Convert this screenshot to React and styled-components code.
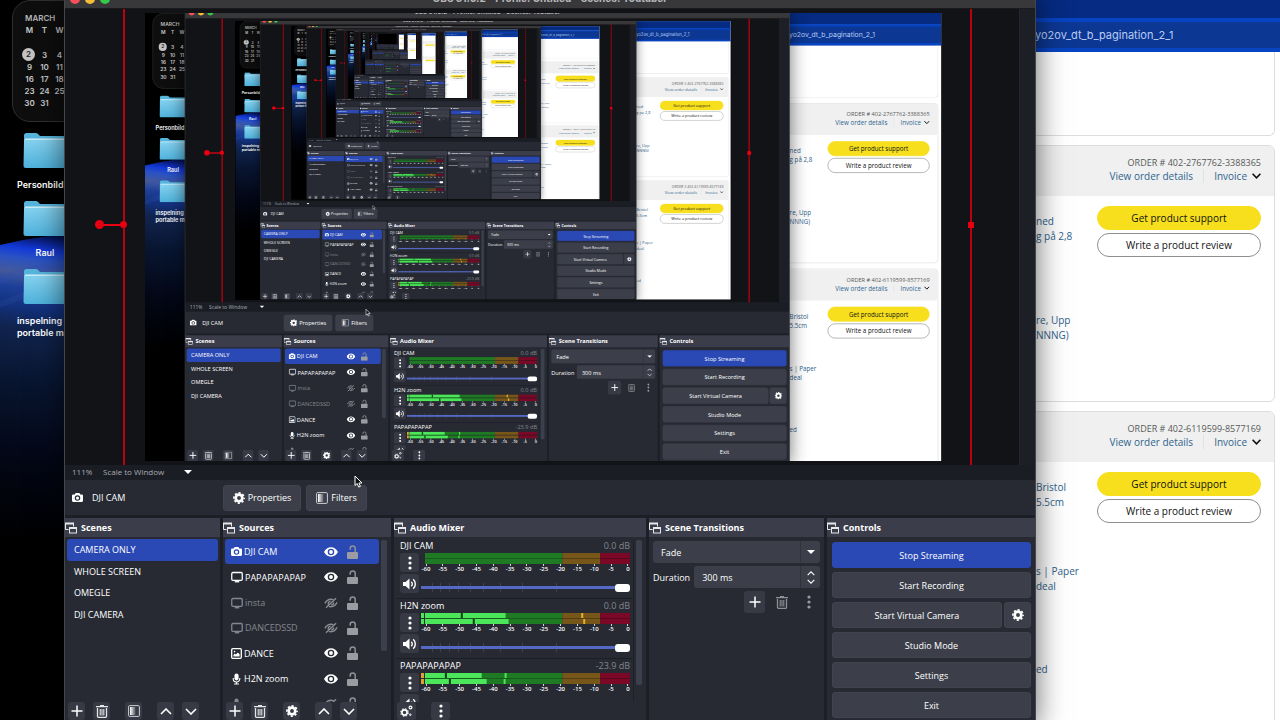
import React, { useId } from 'react';
import styled, { createGlobalStyle } from 'styled-components';

const GlobalStyle = createGlobalStyle`
	* { box-sizing: border-box; }
	body { margin: 0; background: #000; }
	button, input, select { font: inherit; color: inherit; margin: 0; }
	svg { display: block; flex: none; }
`;

/* canvas is rendered at 28/45 of the desktop it captures */
const SCALE_UP = 45 / 28;
const MAX_DEPTH = 8;

/* ---------- icons ---------- */

const GearIcon = ({ size = 12 }) => (
	<svg width={size} height={size} viewBox="0 0 16 16" fill="none" stroke="#fff">
		<circle cx="8" cy="8" r="4.4" strokeWidth="3.6" />
		<circle cx="8" cy="8" r="6.8" strokeWidth="2.2" strokeDasharray="2.9 2.44" strokeDashoffset="1.45" />
	</svg>
);

const CameraIcon = ({ size = 11 }) => (
	<svg width={size} height={size} viewBox="0 0 16 16" fill="#fff">
		<path fillRule="evenodd" d="M5.2 1.5h5.6l1.2 2.2h2.4A1.6 1.6 0 0 1 16 5.3v7.6a1.6 1.6 0 0 1-1.6 1.6H1.6A1.6 1.6 0 0 1 0 12.9V5.3a1.6 1.6 0 0 1 1.6-1.6H4zM8 4.8a4 4 0 1 0 0 8 4 4 0 0 0 0-8z" />
		<circle cx="8" cy="8.8" r="2.3" />
	</svg>
);

const DisplayIcon = () => (
	<svg width="12" height="12" viewBox="0 0 16 16" fill="none" stroke="currentColor">
		<rect x="1" y="2" width="14" height="10.5" rx="1.5" strokeWidth="1.7" />
		<path d="M5 14.3h6" strokeWidth="1.8" />
	</svg>
);

const ImageIcon = () => (
	<svg width="11" height="11" viewBox="0 0 16 16" fill="none" stroke="currentColor">
		<rect x="1" y="1" width="14" height="14" rx="1.5" strokeWidth="1.9" />
		<path d="M3.5 12.5V10l2-2 1.5 1.5L10 6.5l2.5 2.5v3.5z" fill="currentColor" stroke="none" />
		<circle cx="5.2" cy="5.2" r="1.2" fill="currentColor" stroke="none" />
	</svg>
);

const MicIcon = () => (
	<svg width="11" height="12" viewBox="0 0 16 16" fill="none" stroke="currentColor">
		<rect x="5" y="0" width="6" height="10" rx="3" fill="currentColor" stroke="none" />
		<path d="M3.2 6.5v1.2a4.8 4.8 0 0 0 9.6 0V6.5M8 12.5V15M4.5 15.2h7" strokeWidth="1.6" />
	</svg>
);

const EyeIcon = () => (
	<svg width="14" height="12" viewBox="0 0 18 14" fill="#fff">
		<path fillRule="evenodd" d="M0 7C2 3 5.3 1 9 1s7 2 9 6c-2 4-5.3 6-9 6S2 11 0 7zm9-4.2a4.2 4.2 0 1 0 0 8.4 4.2 4.2 0 0 0 0-8.4z" />
		<circle cx="9" cy="7" r="2.5" />
	</svg>
);

const EyeOffIcon = () => (
	<svg width="14" height="12" viewBox="0 0 18 14" fill="none" stroke="#8a8c92" strokeWidth="1.8">
		<path d="M1.2 7.5C3 4 5.7 2.2 9 2.2c1.3 0 2.3.2 3.2.6M16.8 6C15 9.8 12.3 11.8 9 11.8c-1 0-1.9-.1-2.7-.4" />
		<path d="M2.5 13.2L15.5.8M5.5 8.8a3.4 3.4 0 0 1 3-4.2M12.4 6.2A3.4 3.4 0 0 1 9.3 9.6" />
	</svg>
);

const LockIcon = () => (
	<svg width="11" height="14" viewBox="0 0 11 14">
		<path d="M3.2 4.8V3.6a2.5 2.5 0 0 1 5 0V7.5" fill="none" stroke="#8f9197" strokeWidth="1.5" />
		<rect x="0" y="7" width="11" height="7" rx="1" fill="#9b9ca1" />
	</svg>
);

const DockIcon = () => (
	<svg width="12" height="12" viewBox="0 0 12 12" fill="none" stroke="#e8e8ea" strokeWidth="1">
		<path d="M3.5 7.5H.5v-6h8v3" />
		<path d="M0 1.5h9" strokeWidth="2" />
		<rect x="4.5" y="5.5" width="7" height="5.5" />
		<path d="M4 6h8" strokeWidth="2" />
	</svg>
);

const PlusIcon = () => (
	<svg width="12" height="12" viewBox="0 0 12 12" stroke="#fff" strokeWidth="1.5">
		<path d="M6 .5v11M.5 6h11" />
	</svg>
);

const TrashIcon = ({ color = '#e6e6e8' }) => (
	<svg width="12" height="13" viewBox="0 0 12 13" fill="none" stroke={color}>
		<path d="M0 1.7h12M4 .6h4" strokeWidth="1.2" />
		<path d="M1.5 3v8.2a1.2 1.2 0 0 0 1.2 1.2h6.6a1.2 1.2 0 0 0 1.2-1.2V3" strokeWidth="1.3" />
		<path d="M4.2 4v6.5M6 4v6.5M7.8 4v6.5" strokeWidth="1.1" />
	</svg>
);

const FilterIcon = () => {
	const id = useId();
	return (
		<svg width="12" height="12" viewBox="0 0 12 12">
			<defs>
				<linearGradient id={id}>
					<stop offset="0" stopColor="#fff" />
					<stop offset="1" stopColor="#fff" stopOpacity=".15" />
				</linearGradient>
			</defs>
			<rect x=".6" y=".6" width="10.8" height="10.8" rx="1" fill="none" stroke="#cfd0d4" strokeWidth="1" />
			<rect x="2" y="2" width="5.5" height="8" fill={`url(#${id})`} />
		</svg>
	);
};

const Chevron = ({ up, w = 12 }) => (
	<svg width={w} height={w / 2 + 1} viewBox="0 0 12 7" fill="none" stroke="#fff" strokeWidth="1.6">
		<path d={up ? 'M1 6l5-5 5 5' : 'M1 1l5 5 5-5'} />
	</svg>
);

const Caret = () => (
	<svg width="8" height="4" viewBox="0 0 8 4" fill="#fff"><path d="M0 0h8L4 4z" /></svg>
);

const DotsIcon = ({ color = '#fff' }) => (
	<svg width="4" height="14" viewBox="0 0 4 14" fill={color}>
		<circle cx="2" cy="2" r="1.6" />
		<circle cx="2" cy="7" r="1.6" />
		<circle cx="2" cy="12" r="1.6" />
	</svg>
);

const SpeakerIcon = () => (
	<svg width="14" height="12" viewBox="0 0 14 12">
		<path d="M0 4h2.6L6.5.5v11L2.6 8H0z" fill="#fff" />
		<path d="M8.3 3.8a3 3 0 0 1 0 4.4M10.2 1.2a6.5 6.5 0 0 1 0 9.6" fill="none" stroke="#fff" strokeWidth="1.4" />
	</svg>
);

const GearsIcon = () => (
	<svg width="13" height="12" viewBox="0 0 13 12" fill="none" stroke="#fff">
		<circle cx="4.5" cy="7.5" r="2.6" strokeWidth="1.7" />
		<circle cx="4.5" cy="7.5" r="3.9" strokeWidth="1" strokeDasharray="1.53 1.53" />
		<circle cx="10.5" cy="2.5" r="1.4" strokeWidth="1.2" />
		<circle cx="10.3" cy="9.7" r=".8" strokeWidth="1" />
	</svg>
);

const FolderIcon = () => {
	const id = useId();
	return (
		<svg width="44" height="36" viewBox="0 0 44 36">
			<defs>
				<linearGradient id={id} x2="0" y2="1">
					<stop offset="0" stopColor="#86d3f0" />
					<stop offset="1" stopColor="#4fb2dc" />
				</linearGradient>
			</defs>
			<path d="M1 3.5A2.5 2.5 0 0 1 3.5 1h9c1.2 0 2 .4 2.8 1.3L17 4h24a3 3 0 0 1 3 3v8H1z" fill="#57b5dc" />
			<path d="M1 9a2.5 2.5 0 0 1 2.5-2.5H44V33a3 3 0 0 1-3 3H3a2.5 2.5 0 0 1-2.5-2.5z" fill={`url(#${id})`} />
			<path d="M2 7.2h42" stroke="#e9f8ff" strokeWidth="1" />
		</svg>
	);
};

/* ---------- desktop ---------- */

const Screen = styled.div`
	position: relative;
	width: ${p => (p.$root ? '100%' : `${SCALE_UP * 100}%`)};
	height: ${p => (p.$root ? '100vh' : `${SCALE_UP * 100}%`)};
	transform: ${p => (p.$root ? 'none' : `scale(${1 / SCALE_UP})`)};
	transform-origin: 0 0;
	overflow: hidden;
	background: #000;
	font-family: "Open Sans", "Noto Sans", sans-serif;
	font-size: 9px;
	color: #fff;
`;

const Wallpaper = styled.svg`
	position: absolute;
	left: 0;
	bottom: 0;
	width: 240px;
	height: 490px;
`;

const DesktopItems = styled.div`
	width: 120px;
	padding-left: 12px;
	font-family: Inter, "Liberation Sans", sans-serif;
	font-weight: 600;
	position: relative;
`;

const Calendar = styled.section`
	height: 122px;
	padding: 11px 9px 0;
	border: 1px solid #2f2f2f;
	border-radius: 18px;
	background: #0e0e0f;
	color: #c9c9c9;
	font-size: 8px;

	h2 {
		margin: 0 0 0 3px;
		font-size: 8px;
		font-weight: 600;
		line-height: 12px;
		color: #b9b9b9;
	}
	table { border-collapse: collapse; }
	th, td {
		width: 15px;
		height: 12px;
		padding: 0;
		text-align: center;
		font-weight: 600;
		line-height: 12px;
	}
	th { height: 24px; vertical-align: top; }
`;

const Today = styled.span`
	display: block;
	width: 13px;
	height: 13px;
	border-radius: 50%;
	background: #c4c4c4;
	color: #222;
	line-height: 13px;
`;

const Folder = styled.div`
	width: 66px;
	height: 68px;
	padding: 0 5px;
	font-size: 9px;
	line-height: 12px;
	text-align: ${p => (p.$center ? 'center' : 'left')};

	svg { margin: 0 0 11px 6px; }
	span { display: block; white-space: nowrap; }
`;

const Folders = styled.div`
	padding-top: 10px;
`;

/* ---------- browser behind OBS ---------- */

const Browser = styled.main`
	position: absolute;
	top: 0;
	right: 0;
	bottom: 0;
	width: 245px;
	background: #fff;
	overflow: hidden;
	font-size: 10px;
`;

const TabStrip = styled.div`
	height: 18px;
	background: #052b82;
`;

const AddressBar = styled.div`
	height: 34px;
	border: solid #0743c2;
	border-width: 4px 0;
	background: #0c3793;
	color: #b9cdf5;
	font-family: Inter, "Liberation Sans", sans-serif;
	font-size: 11px;
	line-height: 26px;
`;

const OrderCard = styled.article`
	height: ${p => p.$height};
	margin: 0 5px 9px -10px;
	border: 1px solid #dcdddd;
	border-radius: ${p => (p.$cut ? '0 0 6px 6px' : '6px')};
	border-top-width: ${p => (p.$cut ? 0 : '1px')};
	overflow: hidden;
`;

const OrderHead = styled.header`
	display: flex;
	flex-direction: column;
	align-items: flex-end;
	height: 50px;
	padding: 10px 13px 0 0;
	background: #f0f0f0;
	color: #565959;
	font-size: 9px;
	line-height: 13px;
`;

const OrderLinks = styled.nav`
	display: flex;
	align-items: center;
	font-size: 10px;
	line-height: 14px;

	a { color: #2f648f; text-decoration: none; }
	a + a {
		display: flex;
		align-items: center;
		gap: 5px;
		margin-left: 10px;
		padding-left: 10px;
		border-left: 1px solid #e2e2e2;
	}
`;

const OrderBody = styled.div`
	display: flex;
	justify-content: space-between;
	padding: 10px 13px 0 10px;
`;

const Product = styled.a`
	display: block;
	height: ${p => p.$height}px;
	padding-top: 8px;
	color: #2f5f8c;
	line-height: 15px;
	text-decoration: none;
	white-space: pre-line;
`;

const OrderActions = styled.div`
	display: flex;
	flex-direction: column;
	gap: 3px;
	width: 164px;
`;

const PillButton = styled.button`
	height: 24px;
	padding: 0;
	border: 1px solid ${p => (p.$primary ? '#f7df1e' : '#8b8f8f')};
	border-radius: 12px;
	background: ${p => (p.$primary ? '#f7df1e' : '#fff')};
	color: #0f1111;
	font-weight: 500;
`;

/* ---------- OBS window ---------- */

const ObsWindow = styled.section`
	position: absolute;
	top: -12px;
	left: 64px;
	right: 244px;
	bottom: 0;
	display: flex;
	flex-direction: column;
	border: solid #45464c;
	border-width: 0 1px;
	background: #1d1f26;
	box-shadow: 0 8px 28px rgba(0, 0, 0, .6);
`;

const TitleBar = styled.header`
	position: relative;
	display: flex;
	align-items: center;
	justify-content: center;
	flex: none;
	height: 21px;
	background: #38383a;
	border-bottom: 1px solid #1a1a1c;
	color: #b8b8ba;
	font-family: Inter, "Liberation Sans", sans-serif;
	font-size: 10px;
	font-weight: 700;
`;

const Lights = styled.div`
	position: absolute;
	left: 5px;
	top: 6px;
	display: flex;
	gap: 5px;
`;

const Light = styled.span`
	width: 10px;
	height: 10px;
	border-radius: 50%;
	background: ${p => p.$color};
`;

const Preview = styled.div`
	flex: 1;
	min-height: 0;
	display: flex;
	align-items: center;
	justify-content: center;
	padding-left: 3px;
	margin-right: 15px;
	border-right: 1px solid #25262c;
	background: #121317;
	overflow: hidden;
`;

const CanvasWrap = styled.div`
	position: relative;
	flex: none;
	height: calc(100% - 8px);
	aspect-ratio: 16 / 9;
`;

const Canvas = styled.div`
	width: 100%;
	height: 100%;
	overflow: hidden;
	background: #000;
`;

/* selection outline of the camera source, wider than the canvas */
const SourceOutline = styled.div`
	position: absolute;
	top: -40px;
	bottom: -40px;
	left: -22px;
	right: -30px;
	border: solid #bd0010;
	border-width: 0 2px;
`;

const Handle = styled.i`
	position: absolute;
	top: calc(47% - 1px);
	background: #e60012;

	&.rotate { left: -30px; width: 9px; height: 9px; border-radius: 50%; }
	&.stem { left: -24px; width: 24px; height: 2px; margin-top: 4px; }
	&.left { left: -5px; width: 7px; height: 7px; margin-top: 1px; border-radius: 50%; }
	&.right { right: -4px; width: 6px; height: 6px; margin-top: 2px; }
`;

const ZoomBar = styled.div`
	display: flex;
	align-items: center;
	flex: none;
	height: 15px;
	padding: 0 0 2px 7px;
	background: #1b1d24;
	color: #a9abb2;
	font-size: 8px;

	span { width: 81px; }
	span:first-child { width: 31px; }
`;

const ContextBar = styled.div`
	display: flex;
	align-items: center;
	flex: none;
	height: 35px;
	margin-bottom: 3px;
	padding-left: 7px;
	background: #272a33;
`;

const ContextName = styled.div`
	display: flex;
	align-items: center;
	gap: 9px;
	width: 151px;
`;

const Button = styled.button`
	display: flex;
	align-items: center;
	justify-content: center;
	gap: 3px;
	height: 26px;
	padding: 0;
	border: 1px solid ${p => (p.$primary ? '#2a49b5' : '#41444f')};
	border-radius: 3px;
	background: ${p => (p.$primary ? '#2a49b5' : '#3c3f4a')};
	width: ${p => (p.$width ? `${p.$width}px` : 'auto')};
	flex: ${p => (p.$grow ? 1 : 'none')};
	margin-right: ${p => (p.$gapRight ? '5px' : 0)};
`;

const Docks = styled.div`
	display: flex;
	flex: none;
	gap: 3px;
	height: 202px;
`;

const DockBox = styled.section`
	display: flex;
	flex-direction: column;
	flex: ${p => p.$size} 1 0;
	min-width: 0;
	background: #272a33;
`;

const DockTitle = styled.h2`
	display: flex;
	align-items: center;
	gap: 4px;
	flex: none;
	height: 19px;
	margin: 0;
	background: #3b3e4a;
	font-size: 9px;
	font-weight: 700;
`;

const DockBody = styled.div`
	flex: 1;
	min-height: 0;
	overflow: hidden;
	display: flex;
	padding: 2px 2px 0 2px;
`;

const SceneList = styled.ul`
	flex: 1;
	display: grid;
	grid-auto-rows: 1fr;
	height: 86px;
	margin: 0;
	padding: 0;
	list-style: none;
`;

const SceneItem = styled.li`
	display: flex;
	align-items: center;
	padding-left: 7px;
	border-radius: 3px;
	background: ${p => (p.$active ? '#2a49b5' : 'none')};
`;

const SourceList = styled(SceneList)`
	height: 178px;
`;

const SourceItem = styled(SceneItem)`
	padding: 0 21px 0 6px;
	color: ${p => (p.$off ? '#85878e' : '#fff')};
	gap: 2px;

	span { flex: 1; white-space: nowrap; }
	svg:last-child { margin-left: 7px; }
`;

const ScrollThumb = styled.div`
	flex: none;
	width: 6px;
	height: ${p => p.$height}px;
	margin: 1px 2px 0 2px;
	border-radius: 2px;
	background: #3c404d;
`;

const DockToolbar = styled.div`
	display: flex;
	flex: none;
	gap: 8px;
	height: 18px;
	padding-left: 3px;
	overflow: hidden;
`;

const ToolButton = styled.button`
	display: flex;
	align-items: center;
	justify-content: center;
	flex: none;
	width: ${p => p.$width || 17}px;
	height: ${p => p.$height || 18}px;
	padding: 0;
	border: 0;
	border-radius: 3px;
	background: ${p => (p.$flat ? 'none' : '#373a45')};
	margin-left: ${p => (p.$apart ? '7px' : 0)};
`;

/* ---------- mixer ---------- */

const Channels = styled.div`
	flex: 1;
	min-width: 0;
	border-right: 1px solid #1f2129;
`;

const Channel = styled.div`
	height: 60px;
	padding: 0 3px 0 4px;
	border-bottom: 1px solid #1d1f26;
`;

const ChannelHead = styled.div`
	display: flex;
	justify-content: space-between;
	height: 14px;
	line-height: 13px;

	output { color: #84868d; }
`;

const ChannelBody = styled.div`
	display: flex;
	gap: 2px;
`;

const ChannelButtons = styled.div`
	display: flex;
	flex-direction: column;
	gap: 2px;
`;

const Meters = styled.div`
	flex: 1;
	min-width: 0;
`;

const MeterSvg = styled.svg`
	width: 100%;
	height: 11px;
`;

const Scale = styled.div`
	display: flex;
	justify-content: space-between;
	height: 12px;
	margin-right: -3px;
	font-size: 6px;
	font-weight: 600;
	line-height: 9px;

	span {
		width: 10px;
		text-align: center;
		background: linear-gradient(#d0d0d3, #d0d0d3) 50% 0 / 1px 2px no-repeat;
		padding-top: 1px;
	}
`;

const faderTicks = [11, 19, 28, 37, 49, 62, 79, 101, 135];

const Fader = styled.input`
	display: block;
	appearance: none;
	width: 100%;
	height: 15px;
	margin: 4px 0 0;
	background:
		linear-gradient(#5468c4, #5468c4) 0 50% / 100% 3px no-repeat,
		${faderTicks.map(x => `linear-gradient(#3c404d, #3c404d) ${x}px 50% / 1px 9px no-repeat`).join(', ')};

	&::-webkit-slider-thumb {
		appearance: none;
		width: 15px;
		height: 8px;
		border-radius: 3px;
		background: #fff;
	}
`;

/* ---------- transitions ---------- */

const TransitionBody = styled.div`
	display: flex;
	flex-direction: column;
	gap: 3px;
	padding: 4px 4px 0;
`;

const Field = styled.div`
	display: flex;
	align-items: center;
	flex: 1 1 auto;
	min-width: 0;
	height: 22px;
	border-radius: 3px;
	background: #3c3f4a;

	select, input {
		appearance: none;
		flex: 1;
		width: 0;
		height: 100%;
		padding: 0 0 0 8px;
		border: 0;
		background: none;
	}
`;

const FieldArrow = styled.span`
	display: flex;
	flex-direction: column;
	align-items: center;
	justify-content: center;
	gap: 3px;
	flex: none;
	width: 20px;
	height: 100%;
	border-left: 1px solid #30333d;
	pointer-events: none;
`;

const FieldRow = styled.div`
	display: flex;
	align-items: center;
	gap: 4px;
`;

const TransitionTools = styled.div`
	display: flex;
	justify-content: flex-end;
	gap: 6px;
	padding-right: 1px;
`;

const ControlList = styled.div`
	display: flex;
	flex-direction: column;
	gap: 4px;
	padding: 5px 4px 0 5px;
	overflow: hidden;
`;

const ControlRow = styled.div`
	display: flex;
	gap: 2px;
`;

const Cursor = styled.svg`
	position: absolute;
	left: 289px;
	bottom: 232px;
`;

const scenes = ['CAMERA ONLY', 'WHOLE SCREEN', 'OMEGLE', 'DJI CAMERA'];

const sources = [
	{ name: 'DJI CAM', icon: <CameraIcon />, on: true, active: true },
	{ name: 'PAPAPAPAPAP', icon: <DisplayIcon />, on: true },
	{ name: 'insta', icon: <DisplayIcon />, on: false },
	{ name: 'DANCEDSSD', icon: <DisplayIcon />, on: false },
	{ name: 'DANCE', icon: <ImageIcon />, on: true },
	{ name: 'H2N zoom', icon: <MicIcon />, on: true },
	{ name: '', icon: <MicIcon />, on: false },
];

/* bars and marks in meter units, 0 to 210 */
const channels = [
	{ name: 'DJI CAM', db: '0.0 dB', bars: [0, 0], marks: [] },
	{
		name: 'H2N zoom', db: '0.0 dB', clip: '#4ce65a', bars: [85, 88],
		marks: [[0, 40, '#103d18'], [1, 52, '#103d18'], [0, 161, '#e0b030'], [1, 163, '#e0b030']],
	},
	{
		name: 'PAPAPAPAPAP', db: '-23.9 dB', clip: '#e0a030', bars: [61, 66],
		marks: [[0, 24, '#103d18'], [1, 28, '#103d18'], [0, 84, '#4ce65a'], [1, 83, '#4ce65a']],
	},
];

const ticks = [-60, -55, -50, -45, -40, -35, -30, -25, -20, -15, -10, -5, 0];

const Meter = ({ bars, marks, clip }) => (
	<MeterSvg viewBox="0 0 210 11" preserveAspectRatio="none">
		{[0, 1].map(i => (
			<g key={i} transform={`translate(0 ${i * 6})`}>
				<rect x="4" width="138" height="5" fill="#1f7a24" />
				<rect x="142" width="38" height="5" fill="#77561a" />
				<rect x="180" width="30" height="5" fill="#7a0826" />
				{clip && <rect x="0" width="3" height="5" fill={clip} />}
				{bars[i] > 0 && <rect x="4" width={bars[i] - 4} height="5" fill="#4ce65a" />}
				{marks.filter(m => m[0] === i).map(m => (
					<rect key={m[1]} x={m[1]} width="2" height="5" fill={m[2]} />
				))}
			</g>
		))}
		<path d="M4 5.5h138" stroke="#175a1c" />
		<path d="M142 5.5h38" stroke="#553d12" />
		<path d="M180 5.5h30" stroke="#5b061d" />
	</MeterSvg>
);

const Dock = ({ title, size, children }) => (
	<DockBox $size={size}>
		<DockTitle><DockIcon />{title}</DockTitle>
		{children}
	</DockBox>
);

const ListToolbar = ({ middle }) => (
	<DockToolbar>
		<ToolButton aria-label="Add"><PlusIcon /></ToolButton>
		<ToolButton aria-label="Remove"><TrashIcon /></ToolButton>
		<ToolButton aria-label="Options" $apart>{middle}</ToolButton>
		<ToolButton aria-label="Move up" $apart><Chevron up /></ToolButton>
		<ToolButton aria-label="Move down"><Chevron /></ToolButton>
	</DockToolbar>
);

const Order = ({ number, height, products }) => (
	<OrderCard $height={height}>
		<OrderHead>
			<span>ORDER # {number}</span>
			<OrderLinks>
				<a href="#details">View order details</a>
				<a href="#invoice">
					Invoice
					<svg width="9" height="6" viewBox="0 0 9 6" fill="none" stroke="#0f1111" strokeWidth="1.6"><path d="M.6.8l3.9 4 3.9-4" /></svg>
				</a>
			</OrderLinks>
		</OrderHead>
		<OrderBody>
			<div>
				{products.map(p => (
					<Product key={p.text} href="#product" $height={p.height}>{p.text}</Product>
				))}
			</div>
			<OrderActions>
				<PillButton $primary>Get product support</PillButton>
				<PillButton>Write a product review</PillButton>
			</OrderActions>
		</OrderBody>
	</OrderCard>
);

const Desktop = () => {
	const id = useId();
	return (
		<>
			<Wallpaper viewBox="0 0 240 490" preserveAspectRatio="none">
				<defs>
					<linearGradient id={id} x2="-60" y2="490" gradientUnits="userSpaceOnUse">
						<stop offset="0" stopColor="#04104a" />
						<stop offset=".03" stopColor="#1238d8" />
						<stop offset=".05" stopColor="#2a52c4" />
						<stop offset=".08" stopColor="#44599a" />
						<stop offset=".11" stopColor="#1d3f98" />
						<stop offset=".15" stopColor="#12307c" />
						<stop offset=".19" stopColor="#11244e" />
						<stop offset=".3" stopColor="#081530" />
						<stop offset=".45" stopColor="#030716" />
						<stop offset=".62" stopColor="#000" />
					</linearGradient>
				</defs>
				<path d="M0 15Q50 3 110 0H240V490H0z" fill={`url(#${id})`} />
				<path d="M0 46Q30 34 80 28V34Q40 40 0 54z" fill="#2c50b8" opacity=".25" />
				<path d="M0 72Q30 56 80 52V58Q40 62 0 78z" fill="#3355a8" opacity=".2" />
			</Wallpaper>
			<DesktopItems>
				<Calendar>
					<h2>MARCH</h2>
					<table>
						<thead><tr><th>M</th><th>T</th><th>W</th></tr></thead>
						<tbody>
							<tr><td><Today>2</Today></td><td>3</td><td>4</td></tr>
							<tr><td>9</td><td>10</td><td>11</td></tr>
							<tr><td>16</td><td>17</td><td>18</td></tr>
							<tr><td>23</td><td>24</td><td>25</td></tr>
							<tr><td>30</td><td>31</td><td /></tr>
						</tbody>
					</table>
				</Calendar>
				<Folders>
					<Folder><FolderIcon /><span>Personbild</span></Folder>
					<Folder $center><FolderIcon /><span>Raul</span></Folder>
					<Folder><FolderIcon /><span>inspelning</span><span>portable m</span></Folder>
				</Folders>
			</DesktopItems>
		</>
	);
};

const Obs = ({ depth }) => {
	const id = useId();
	return (
		<ObsWindow>
			<TitleBar>
				<Lights>
					<Light $color="#f4515c" />
					<Light $color="#f8bd38" />
					<Light $color="#35c94a" />
				</Lights>
				OBS 31.0.2 - Profile: Untitled - Scenes: Youtuber
			</TitleBar>
			<Preview>
				<CanvasWrap>
					<Canvas inert>
						{depth < MAX_DEPTH && <Workspace depth={depth + 1} />}
					</Canvas>
					<SourceOutline>
						<Handle className="rotate" />
						<Handle className="stem" />
						<Handle className="left" />
						<Handle className="right" />
					</SourceOutline>
				</CanvasWrap>
			</Preview>
			<ZoomBar><span>111%</span><span>Scale to Window</span><Caret /></ZoomBar>
			<ContextBar>
				<ContextName><CameraIcon />DJI CAM</ContextName>
				<Button $width={78} $gapRight><GearIcon />Properties</Button>
				<Button $width={61}><FilterIcon />Filters</Button>
			</ContextBar>
			<Docks>
				<Dock title="Scenes" size={155}>
					<DockBody>
						<SceneList>
							{scenes.map((s, i) => <SceneItem key={s} $active={i === 0}>{s}</SceneItem>)}
						</SceneList>
					</DockBody>
					<ListToolbar middle={<FilterIcon />} />
				</Dock>
				<Dock title="Sources" size={168}>
					<DockBody>
						<SourceList>
							{sources.map((s, i) => (
								<SourceItem key={i} $active={s.active} $off={!s.on}>
									{s.icon}
									<span>{s.name}</span>
									{s.on ? <EyeIcon /> : <EyeOffIcon />}
									<LockIcon />
								</SourceItem>
							))}
						</SourceList>
						<ScrollThumb $height={111} />
					</DockBody>
					<ListToolbar middle={<GearIcon />} />
				</Dock>
				<Dock title="Audio Mixer" size={252}>
					<DockBody>
						<Channels>
							{channels.map(c => (
								<Channel key={c.name}>
									<ChannelHead><span>{c.name}</span><output>{c.db}</output></ChannelHead>
									<ChannelBody>
										<ChannelButtons>
											<ToolButton aria-label="Channel menu" $width={19} $height={19}><DotsIcon /></ToolButton>
											<ToolButton aria-label="Mute" $width={19} $height={19}><SpeakerIcon /></ToolButton>
										</ChannelButtons>
										<Meters>
											<Meter {...c} />
											<Scale>{ticks.map(t => <span key={t}>{t}</span>)}</Scale>
											<Fader type="range" aria-label={c.name} defaultValue={100} />
										</Meters>
									</ChannelBody>
								</Channel>
							))}
						</Channels>
						<ScrollThumb $height={145} />
					</DockBody>
					<DockToolbar>
						<ToolButton aria-label="Audio settings" $width={19}><GearsIcon /></ToolButton>
						<ToolButton aria-label="Mixer menu" $width={19} $apart><DotsIcon /></ToolButton>
					</DockToolbar>
				</Dock>
				<Dock title="Scene Transitions" size={175}>
					<TransitionBody>
						<Field>
							<select aria-label="Transition" defaultValue="Fade"><option>Fade</option></select>
							<FieldArrow><Caret /></FieldArrow>
						</Field>
						<FieldRow>
							<label htmlFor={id}>Duration</label>
							<Field>
								<input id={id} type="text" defaultValue="300 ms" />
								<FieldArrow><Chevron up w={8} /><Chevron w={8} /></FieldArrow>
							</Field>
						</FieldRow>
						<TransitionTools>
							<ToolButton aria-label="Add transition" $width={21} $height={22}><PlusIcon /></ToolButton>
							<ToolButton aria-label="Remove transition" $width={21} $height={22} $flat><TrashIcon color="#8f9197" /></ToolButton>
							<ToolButton aria-label="Transition menu" $width={21} $height={22} $flat><DotsIcon color="#9b9ca1" /></ToolButton>
						</TransitionTools>
					</TransitionBody>
				</Dock>
				<Dock title="Controls" size={208}>
					<ControlList>
						<Button $primary>Stop Streaming</Button>
						<Button>Start Recording</Button>
						<ControlRow>
							<Button $grow>Start Virtual Camera</Button>
							<Button $width={27} aria-label="Virtual camera settings"><GearIcon /></Button>
						</ControlRow>
						<Button>Studio Mode</Button>
						<Button>Settings</Button>
						<Button>Exit</Button>
					</ControlList>
				</Dock>
			</Docks>
			<Cursor width="9" height="13" viewBox="0 0 9 13">
				<path d="M1 1v9.5l2.2-2 1.5 3.6 1.7-.7L4.9 8H8z" fill="#111" stroke="#fff" strokeWidth="1" />
			</Cursor>
		</ObsWindow>
	);
};

function Workspace({ depth }) {
	return (
		<Screen $root={depth === 0}>
			<Desktop />
			<Browser>
				<TabStrip />
				<AddressBar>yo2ov_dt_b_pagination_2_1</AddressBar>
				<OrderCard $height="84px" $cut />
				<Order
					number="402-2767762-3388365"
					height="257px"
					products={[{ text: 'ned\ng på 2,8', height: 99 }, { text: 're, Upp\nNNNG)', height: 60 }]}
				/>
				<Order
					number="402-6119599-8577169"
					height="340px"
					products={[
						{ text: 'Bristol\n5.5cm', height: 84 },
						{ text: 's | Paper\ndeal', height: 98 },
						{ text: 'ed', height: 60 },
					]}
				/>
			</Browser>
			<Obs depth={depth} />
		</Screen>
	);
}

export default function App() {
	return (
		<>
			<GlobalStyle />
			<Workspace depth={0} />
		</>
	);
}
